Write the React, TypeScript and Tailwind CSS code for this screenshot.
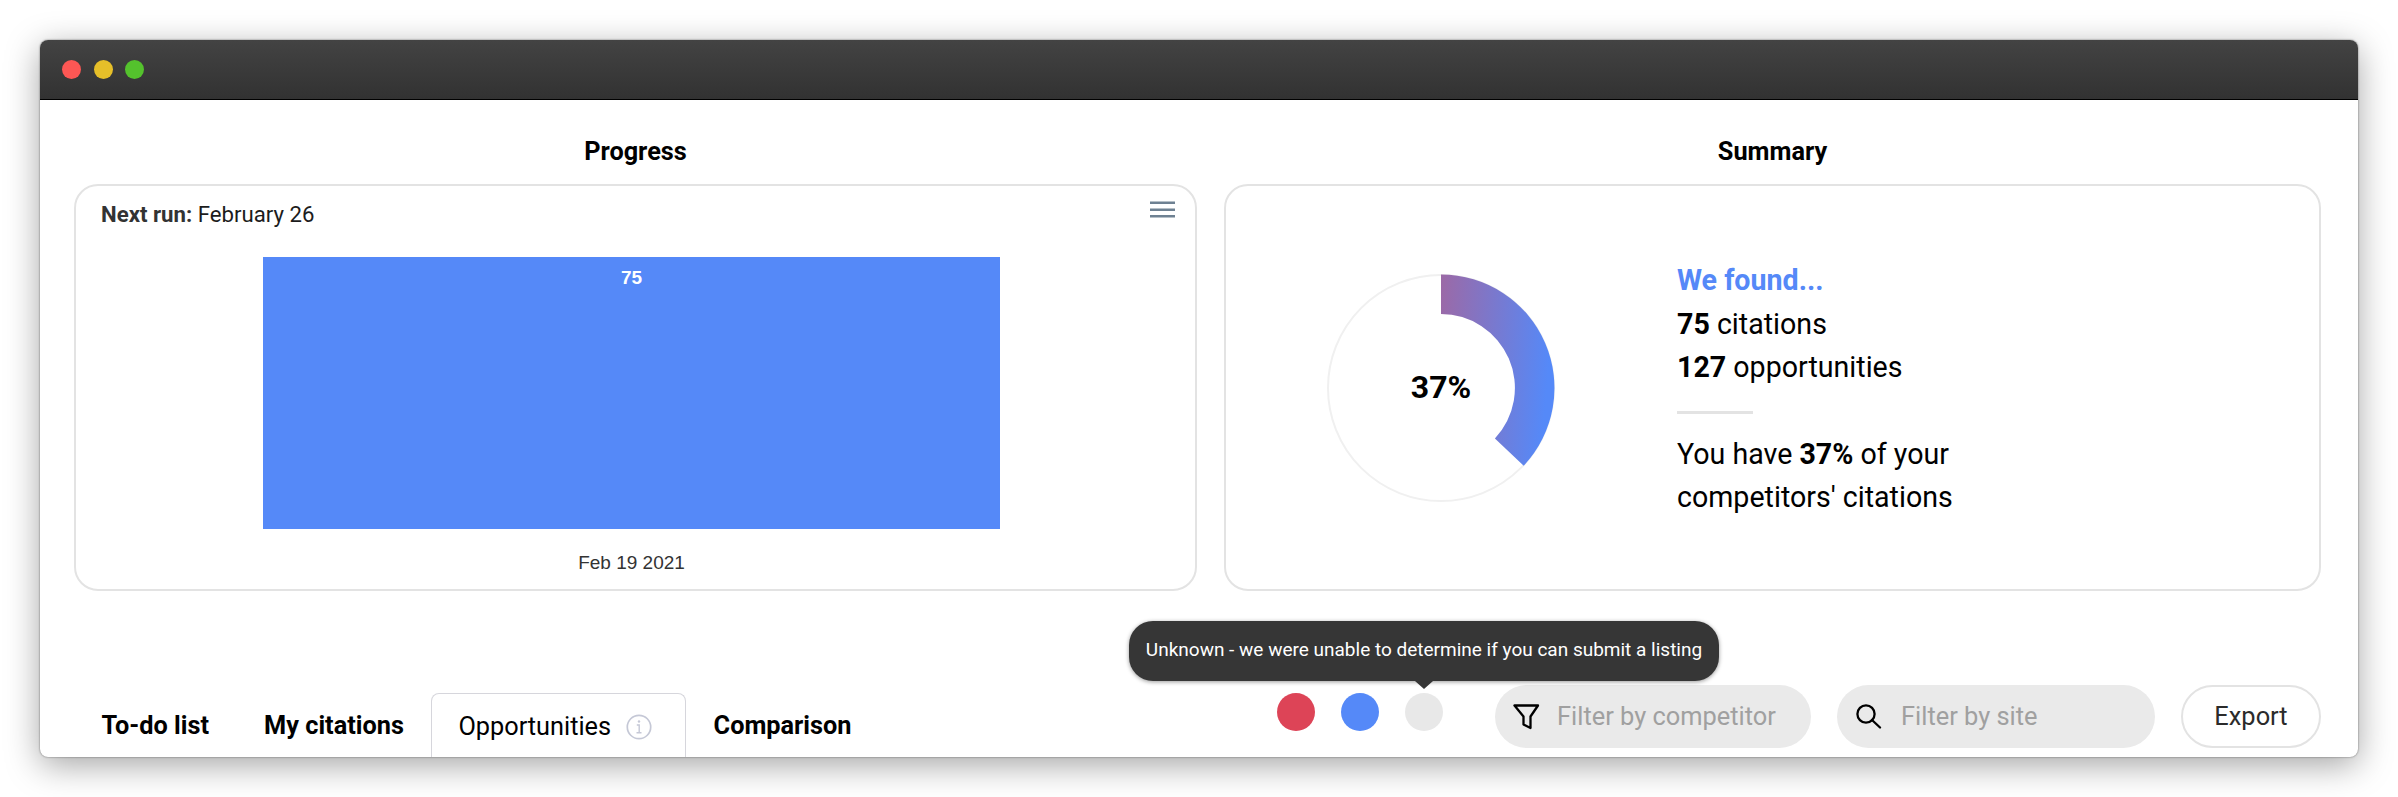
import React from 'react'

const Donut = () => (
  <svg width="230" height="230" viewBox="0 0 230 230" className="shrink-0">
    <defs>
      <linearGradient id="donutFill" x1="0" y1="0" x2="1" y2="0.15">
        <stop offset="0" stopColor="#9c69a6" />
        <stop offset="1" stopColor="#5589f8" />
      </linearGradient>
    </defs>
    <circle cx="115" cy="115" r="113" fill="none" stroke="#f0f0f0" strokeWidth="2" />
    <path
      d="M115 1.5 A113.5 113.5 0 0 1 197.7 192.7 L168.9 165.6 A74 74 0 0 0 115 41 Z"
      fill="url(#donutFill)"
    />
    <text
      x="115"
      y="125"
      textAnchor="middle"
      fontSize="32"
      fontWeight="700"
      fontFamily="Roboto, sans-serif"
      fill="#000"
    >
      37%
    </text>
  </svg>
)

const MenuIcon = () => (
  <svg width="25" height="18" viewBox="0 0 25 18" fill="#6e8192" className="mt-[2px] self-start">
    <rect x="0" y="1.5" width="25" height="2.5" />
    <rect x="0" y="8.5" width="25" height="2.5" />
    <rect x="0" y="15" width="25" height="2.5" />
  </svg>
)

const InfoIcon = () => (
  <svg width="26" height="26" viewBox="0 0 26 26" fill="none" stroke="#c5c8d6" className="ml-[15px]">
    <circle cx="13" cy="13" r="11.7" strokeWidth="1.7" />
    <circle cx="13" cy="7.5" r="1.2" fill="#c5c8d6" stroke="none" />
    <path d="M10.8 11h2.4v7.5M10.5 18.8h5" strokeWidth="1.4" />
  </svg>
)

const FilterIcon = () => (
  <svg width="27" height="26" viewBox="0 0 27 26" fill="none" stroke="#000" strokeWidth="2.3" strokeLinejoin="round" className="shrink-0">
    <path d="M1.5 1.5H25L17.5 12.5V24L10.5 20.5V12.5Z" />
  </svg>
)

const SearchIcon = () => (
  <svg width="26" height="25" viewBox="0 0 26 25" fill="none" stroke="#000" strokeWidth="2.3" strokeLinecap="round" className="shrink-0">
    <circle cx="10" cy="10" r="8.6" />
    <path d="M16 16l8 7.5" />
  </svg>
)

const Tab: React.FC<{ label: string; active?: boolean }> = ({ label, active }) => (
  <div
    className={
      active
        ? 'flex h-[66px] items-center rounded-t-lg border border-b-0 border-[#d6d6dc] pl-[26px] pr-[33px] text-[25.3px] text-black'
        : 'flex h-[66px] items-center px-[27.5px] text-[25.3px] font-bold text-black'
    }
  >
    {label}
    {active && <InfoIcon />}
  </div>
)

export default function App() {
  return (
    <div className="h-[797px] w-[2398px] overflow-hidden bg-white pl-[40px] pt-[40px] font-['Roboto',sans-serif]">
      <div className="h-[717px] w-[2318px] overflow-hidden rounded-lg bg-white shadow-[0_0_2px_rgba(0,0,0,0.55),0_8px_34px_rgba(0,0,0,0.36)]">
        <div className="flex h-[60px] items-center gap-[12.5px] border-b border-black bg-gradient-to-b from-[#434343] to-[#323232] pl-[22px]">
          <span className="h-[19px] w-[19px] rounded-full bg-[#fd5754]" />
          <span className="h-[19px] w-[19px] rounded-full bg-[#e6bf29]" />
          <span className="h-[19px] w-[19px] rounded-full bg-[#54c22d]" />
        </div>

        <div className="pl-[34px] pr-[37px] pt-[34px]">
          <div className="flex gap-[27px]">
            <div className="w-[1123px]">
              <h2 className="mb-[14px] text-center text-[25.3px] leading-[36px] font-bold text-black">Progress</h2>
              <div className="h-[407px] rounded-[24px] border-2 border-[#e3e3e3] pl-[25px] pr-[20px] pt-[12px]">
                <div className="flex h-[32px] items-center justify-between">
                  <p className="pt-[1px] text-[22.2px] text-[#1c1c1c]">
                    <span className="font-bold text-[#333]">Next run:</span> February 26
                  </p>
                  <MenuIcon />
                </div>
                <div className="ml-[162px] mt-[27px] flex h-[272px] w-[737px] justify-center bg-[#5589f8] pt-[9px]">
                  <span className="font-['Liberation_Sans',sans-serif] text-[19px] leading-[24px] font-bold text-white">75</span>
                </div>
                <p className="ml-[162px] mt-[24px] w-[737px] text-center font-['Liberation_Sans',sans-serif] text-[19px] leading-[20px] text-[#333]">
                  Feb 19 2021
                </p>
              </div>
            </div>

            <div className="w-[1097px]">
              <h2 className="mb-[14px] text-center text-[25.3px] leading-[36px] font-bold text-black">Summary</h2>
              <div className="flex h-[407px] items-center rounded-[24px] border-2 border-[#e3e3e3] pl-[100px]">
                <Donut />
                <div className="ml-[121px] mt-[4px] text-[28.6px] leading-[43.5px] text-black">
                  <p className="font-bold text-[#5589f8]">We found...</p>
                  <p>
                    <span className="font-bold">75</span> citations
                  </p>
                  <p>
                    <span className="font-bold">127</span> opportunities
                  </p>
                  <div className="mb-[19px] mt-[21px] h-[3px] w-[76px] bg-[#e3e3e3]" />
                  <p>
                    You have <span className="font-bold">37%</span> of your
                  </p>
                  <p>competitors' citations</p>
                </div>
              </div>
            </div>
          </div>

          <div className="mt-[94px] flex h-[63px] justify-between">
            <div className="flex pt-[8px]">
              <Tab label="To-do list" />
              <Tab label="My citations" />
              <Tab label="Opportunities" active />
              <Tab label="Comparison" />
            </div>

            <div className="flex items-center">
              <div className="mb-[10px] flex gap-[26px]">
                <span className="h-[38px] w-[38px] rounded-full bg-[#dd4457]" />
                <span className="h-[38px] w-[38px] rounded-full bg-[#5589f8]" />
                <span className="relative h-[38px] w-[38px] rounded-full bg-[#e8e8e8]">
                  <span className="absolute bottom-[50px] left-1/2 flex h-[60px] w-[590px] -translate-x-1/2 items-center justify-center rounded-[24px] bg-[#363636] text-[19px] whitespace-nowrap text-white shadow-[0_1px_4px_rgba(0,0,0,0.4)]">
                    Unknown - we were unable to determine if you can submit a listing
                    <span className="absolute left-1/2 top-full h-0 w-0 -translate-x-1/2 border-x-[9px] border-t-[8px] border-x-transparent border-t-[#363636]" />
                  </span>
                </span>
              </div>
              <div className="ml-[52px] flex h-[63px] w-[316px] items-center rounded-full bg-[#eaeaea] pl-[18px]">
                <FilterIcon />
                <span className="ml-[17px] text-[25.4px] text-[#a0a0a0]">Filter by competitor</span>
              </div>
              <div className="ml-[26px] flex h-[63px] w-[318px] items-center rounded-full bg-[#eaeaea] pl-[19px]">
                <SearchIcon />
                <span className="ml-[19px] text-[25.4px] text-[#a0a0a0]">Filter by site</span>
              </div>
              <div className="ml-[26px] flex h-[63px] w-[140px] items-center justify-center rounded-full border-2 border-[#e3e3e3] text-[25.4px] text-[#2b2b2b]">
                Export
              </div>
            </div>
          </div>
        </div>
      </div>
    </div>
  )
}
